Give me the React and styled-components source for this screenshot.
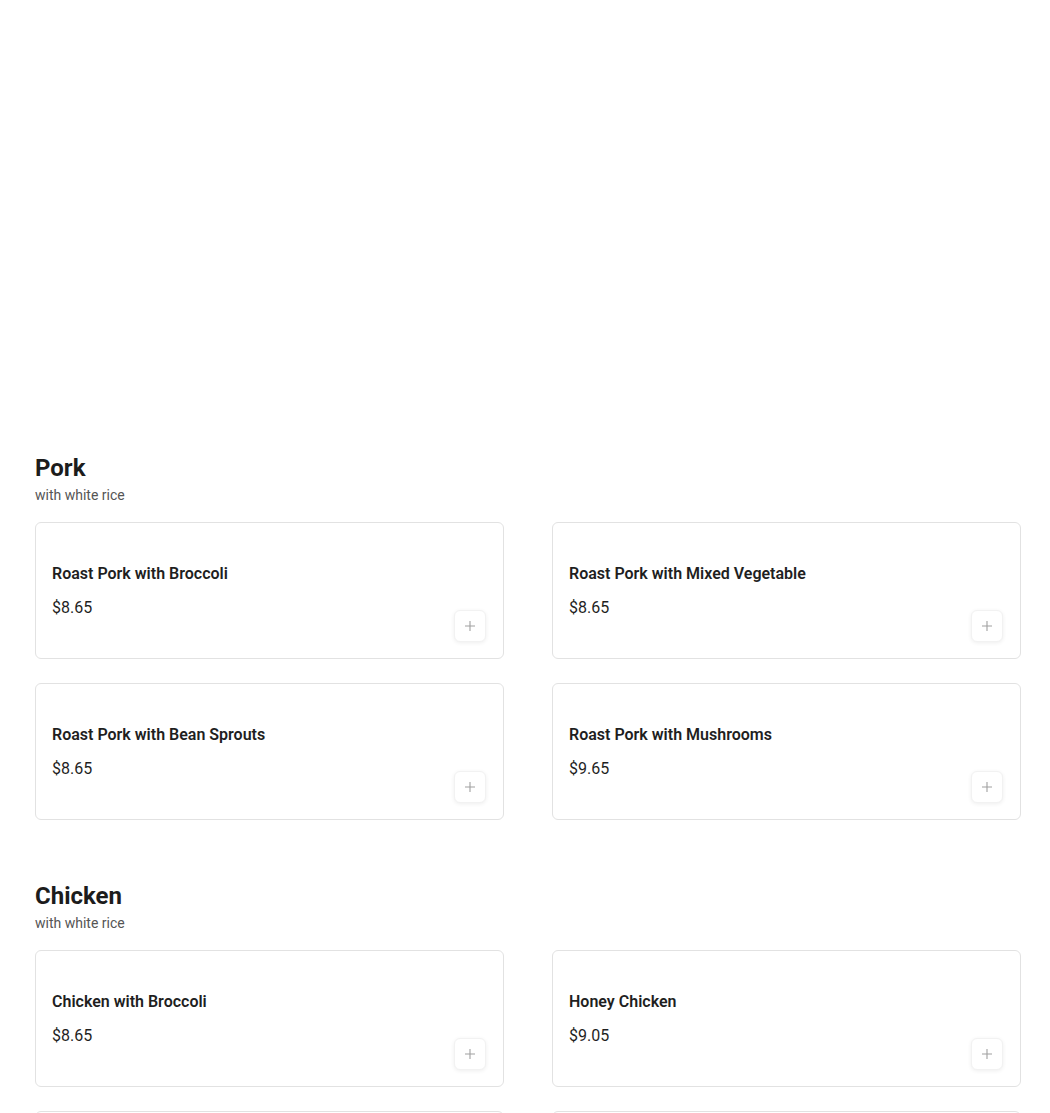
import React from "react";
import styled, { createGlobalStyle } from "styled-components";

const Global = createGlobalStyle`
  html, body { margin: 0; padding: 0; background: #fff; }
  body { font-family: Roboto, "Liberation Sans", Arial, sans-serif; color: #1f1f1f; }
  * { box-sizing: border-box; }
`;

const Page = styled.main`
  padding: 454px 29px 0 35px;
  display: flex;
  flex-direction: column;
  gap: 62px;
`;

const Section = styled.section`
  display: flex;
  flex-direction: column;
`;

const SectionTitle = styled.h2`
  margin: 0;
  font-size: 24px;
  line-height: 28px;
  font-weight: 700;
  color: #1c1c1c;
`;

const SectionSub = styled.p`
  margin: 4px 0 0;
  font-size: 14px;
  line-height: 18px;
  color: #555;
`;

const Grid = styled.div`
  margin-top: 18px;
  display: grid;
  grid-template-columns: 1fr 1fr;
  column-gap: 48px;
  row-gap: 24px;
`;

const Card = styled.div`
  height: 137px;
  border: 1px solid #e2e2e2;
  border-radius: 6px;
  padding: 16px 17px 16px 16px;
  display: flex;
  justify-content: space-between;
  align-items: flex-end;
  background: #fff;
`;

const Info = styled.div`
  align-self: flex-start;
  padding-top: 25px;
  display: flex;
  flex-direction: column;
  gap: 14px;
`;

const Name = styled.div`
  font-size: 16px;
  line-height: 20px;
  font-weight: 600;
  color: #1f1f1f;
`;

const Price = styled.div`
  font-size: 16px;
  line-height: 20px;
  font-weight: 400;
  color: #1f1f1f;
`;

const AddButton = styled.button`
  width: 32px;
  height: 32px;
  border: 1px solid #f2f2f2;
  border-radius: 6px;
  background: #fff;
  box-shadow: 0 1px 4px rgba(0, 0, 0, 0.07);
  display: flex;
  align-items: center;
  justify-content: center;
  padding: 0;
  cursor: pointer;
`;

const PlusIcon = () => (
  <svg width="10" height="10" viewBox="0 0 10 10" fill="none">
    <path d="M5 0v10M0 5h10" stroke="#a0a0a0" strokeWidth="1.1" />
  </svg>
);

const menu = [
  {
    title: "Pork",
    sub: "with white rice",
    items: [
      { name: "Roast Pork with Broccoli", price: "$8.65" },
      { name: "Roast Pork with Mixed Vegetable", price: "$8.65" },
      { name: "Roast Pork with Bean Sprouts", price: "$8.65" },
      { name: "Roast Pork with Mushrooms", price: "$9.65" },
    ],
  },
  {
    title: "Chicken",
    sub: "with white rice",
    items: [
      { name: "Chicken with Broccoli", price: "$8.65" },
      { name: "Honey Chicken", price: "$9.05" },
      { name: "Chicken with Mixed Vegetable", price: "$8.65" },
      { name: "Chicken with Mushrooms", price: "$9.65" },
    ],
  },
];

export default function App() {
  return (
    <>
      <Global />
      <Page>
        {menu.map((s) => (
          <Section key={s.title}>
            <SectionTitle>{s.title}</SectionTitle>
            <SectionSub>{s.sub}</SectionSub>
            <Grid>
              {s.items.map((it) => (
                <Card key={it.name}>
                  <Info>
                    <Name>{it.name}</Name>
                    <Price>{it.price}</Price>
                  </Info>
                  <AddButton aria-label="Add">
                    <PlusIcon />
                  </AddButton>
                </Card>
              ))}
            </Grid>
          </Section>
        ))}
      </Page>
    </>
  );
}
